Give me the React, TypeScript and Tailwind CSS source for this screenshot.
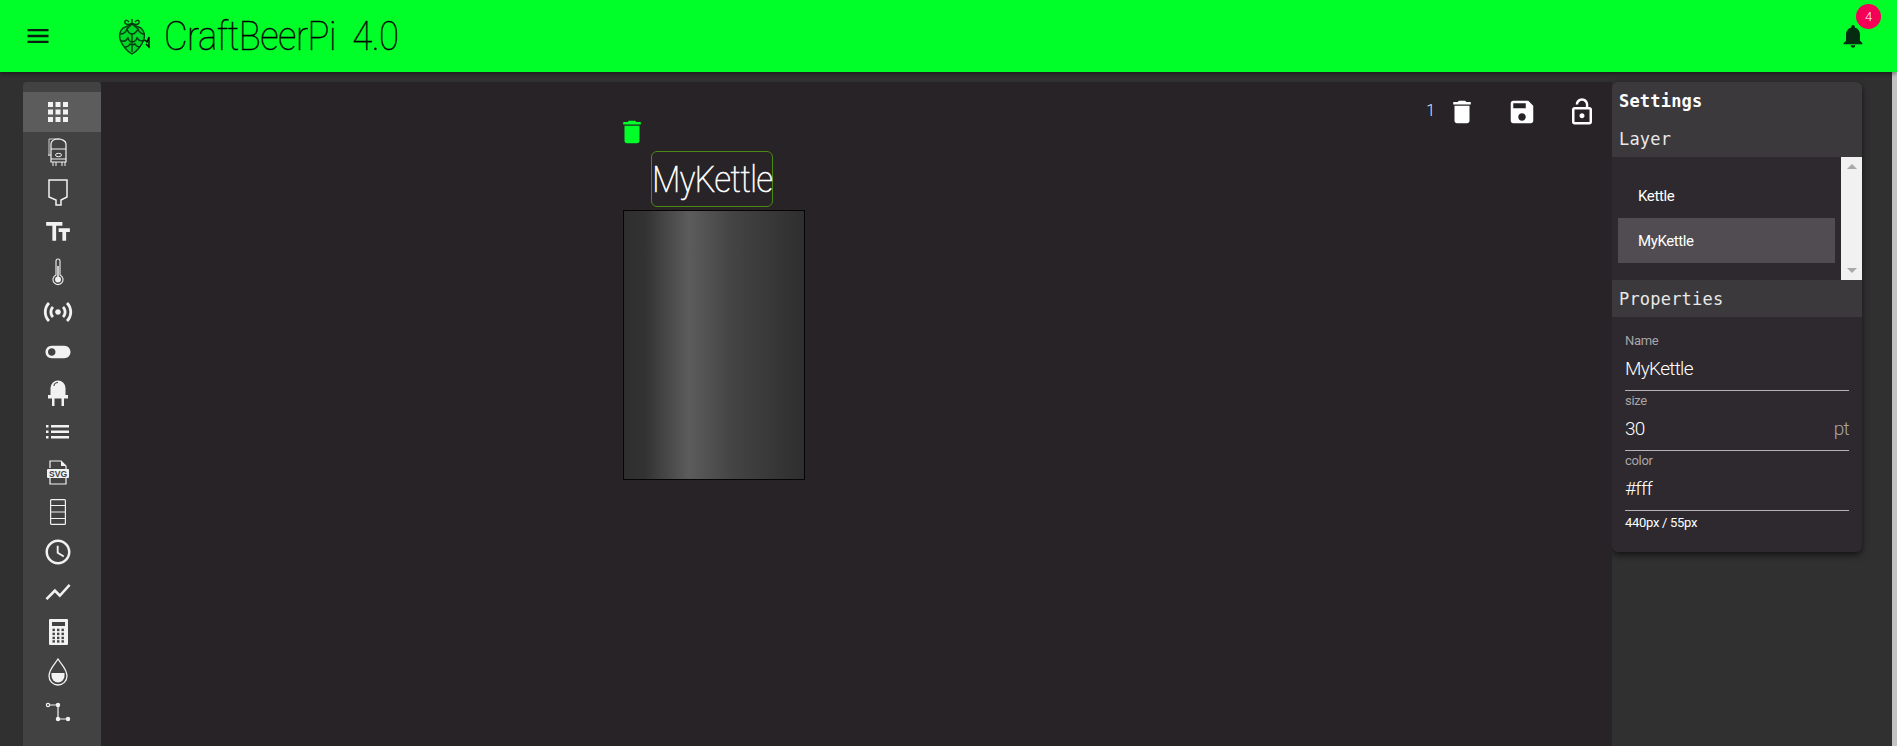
import React from "react";

const P = ({ d, className }: { d: string; className: string }) => (
  <svg viewBox="0 0 24 24" fill="currentColor" className={className}><path d={d} /></svg>
);

const Icons = {
  menu: "M3 18h18v-2H3v2zm0-5h18v-2H3v2zm0-7v2h18V6H3z",
  bell: "M12 22c1.1 0 2-.9 2-2h-4c0 1.1.89 2 2 2zm6-6v-5c0-3.07-1.64-5.64-4.5-6.32V4c0-.83-.67-1.5-1.5-1.5s-1.5.67-1.5 1.5v.68C7.63 5.36 6 7.92 6 11v5l-2 2v1h16v-1l-2-2z",
  del: "M6 19c0 1.1.9 2 2 2h8c1.1 0 2-.9 2-2V7H6v12zM19 4h-3.5l-1-1h-5l-1 1H5v2h14V4z",
  save: "M17 3H5c-1.11 0-2 .9-2 2v14c0 1.1.89 2 2 2h14c1.1 0 2-.9 2-2V7l-4-4zm-5 16c-1.66 0-3-1.34-3-3s1.34-3 3-3 3 1.34 3 3-1.34 3-3 3zm3-10H5V5h10v4z",
  lock: "M12 17c1.1 0 2-.9 2-2s-.9-2-2-2-2 .9-2 2 .9 2 2 2zm6-9h-1V6c0-2.76-2.24-5-5-5S7 3.24 7 6h1.9c0-1.71 1.39-3.1 3.1-3.1 1.71 0 3.1 1.39 3.1 3.1v2H6c-1.1 0-2 .9-2 2v10c0 1.1.9 2 2 2h12c1.1 0 2-.9 2-2V10c0-1.1-.9-2-2-2zm0 12H6V10h12v10z",
  apps: "M4 8h4V4H4v4zm6 12h4v-4h-4v4zm-6 0h4v-4H4v4zm0-6h4v-4H4v4zm6 0h4v-4h-4v4zm6-10v4h4V4h-4zm-6 4h4V4h-4v4zm6 6h4v-4h-4v4zm0 6h4v-4h-4v4z",
  text: "M2.5 4v3h5v12h3V7h5V4h-13zm19 5h-9v3h3v7h3v-7h3V9z",
  sensors: "M7.76 16.24C6.67 15.16 6 13.66 6 12s.67-3.16 1.76-4.24l1.42 1.42C8.45 9.9 8 10.9 8 12c0 1.1.45 2.1 1.17 2.83l-1.41 1.41zm8.48 0C17.33 15.16 18 13.66 18 12s-.67-3.16-1.76-4.24l-1.42 1.42C15.55 9.9 16 10.9 16 12c0 1.1-.45 2.1-1.17 2.83l1.41 1.41zM12 10c-1.1 0-2 .9-2 2s.9 2 2 2 2-.9 2-2-.9-2-2-2zm8 2c0 2.21-.9 4.21-2.35 5.65l1.42 1.42C20.88 17.26 22 14.76 22 12s-1.12-5.26-2.93-7.07l-1.42 1.42C19.1 7.79 20 9.79 20 12zM6.35 6.35L4.93 4.93C3.12 6.74 2 9.24 2 12s1.12 5.26 2.93 7.07l1.42-1.42C4.9 16.21 4 14.21 4 12s.9-4.21 2.35-5.65z",
  toggle: "M17 7H7c-2.76 0-5 2.24-5 5s2.24 5 5 5h10c2.76 0 5-2.24 5-5s-2.24-5-5-5zM7 15c-1.66 0-3-1.34-3-3s1.34-3 3-3 3 1.34 3 3-1.34 3-3 3z",
  clock: "M11.99 2C6.47 2 2 6.48 2 12s4.47 10 9.99 10C17.52 22 22 17.52 22 12S17.52 2 11.99 2zM12 20c-4.42 0-8-3.58-8-8s3.58-8 8-8 8 3.58 8 8-3.58 8-8 8zm.5-13H11v6l5.25 3.15.75-1.23-4.5-2.67z",
  chart: "M3.5 18.49l6-6.01 4 4L22 6.92l-1.41-1.41-7.09 7.97-4-4L2 16.99z",
};

const Tank = () => (
  <svg viewBox="0 0 20 28" className="w-[20px] h-[28px]" fill="none" stroke="currentColor" strokeWidth="1">
    <path d="M1 1h11M1 1v17M0 17h3" strokeWidth="0.8" />
    <path d="M3 6c0-3 3-5 7-5s8 2 8 5v18H3z" strokeWidth="1.2" />
    <path d="M3 11h15M3 21h15M5 24v4M8 24v4M14 24v4M17 24v4" />
    <ellipse cx="10.5" cy="17" rx="3" ry="1.7" />
  </svg>
);
const Hopper = () => (
  <svg viewBox="0 0 20 27" className="w-[20px] h-[27px]" fill="none" stroke="currentColor" strokeWidth="1.5">
    <path d="M1 1h18v17l-6 3v5H8v-5l-7-3z" />
  </svg>
);
const Thermo = () => (
  <svg viewBox="0 0 12 28" className="w-[12px] h-[28px]" fill="none" stroke="currentColor" strokeWidth="1.1">
    <path d="M4 17V3a2 2 0 0 1 4 0v14a5 5 0 1 1-4 0z" />
    <path d="M6 8v13" strokeWidth="1.5" />
    <circle cx="6" cy="21.5" r="3" fill="currentColor" stroke="none" />
  </svg>
);
const Led = () => (
  <svg viewBox="0 0 20 27" className="w-[20px] h-[27px]" fill="currentColor">
    <path d="M2.5 16V9a7.5 7.5 0 0 1 15 0v7z" />
    <path d="M6 7c0-2 2-3.5 4-3.5" stroke="#424242" strokeWidth="1.1" fill="none" />
    <path d="M0 16h20v3.5H0zM4 19h2.5v8H4zM13.5 19H16v8h-2.5z" />
  </svg>
);
const BulletList = () => (
  <svg viewBox="0 0 24 14" className="w-[24px] h-[14px]" fill="currentColor">
    <path d="M0 0h2.5v2.5H0zM0 5.5h2.5V8H0zM0 11h2.5v2.5H0zM5 0h18v2.5H5zM5 5.5h18V8H5zM5 11h18v2.5H5z" />
  </svg>
);
const SvgFile = () => (
  <svg viewBox="0 0 22 25" className="w-[22px] h-[25px]">
    <path d="M3 8V1h11l5 5v18H3v-7" fill="none" stroke="currentColor" strokeWidth="1.2" />
    <path d="M14 1v5h5z" fill="currentColor" />
    <rect x="0" y="9" width="22" height="9" rx="1" fill="currentColor" />
    <text x="11" y="16.8" textAnchor="middle" fontSize="8.6" fontWeight="700" fill="#424242" fontFamily="'Liberation Sans',sans-serif">SVG</text>
  </svg>
);
const Stack = () => (
  <svg viewBox="0 0 16 26" className="w-[16px] h-[26px]" fill="none" stroke="currentColor" strokeWidth="1.2">
    <rect x="0.6" y="0.6" width="14.8" height="24.8" rx="1" />
    <path d="M1 6.5h14M1 13h14M1 19.5h14" />
  </svg>
);
const Calc = () => (
  <svg viewBox="0 0 19 26" className="w-[19px] h-[26px]" fill="currentColor">
    <path fillRule="evenodd" d="M1 0h17a1 1 0 0 1 1 1v24a1 1 0 0 1-1 1H1a1 1 0 0 1-1-1V1a1 1 0 0 1 1-1zm2 3v4h13V3z" />
    {[10.5, 14.5, 18.5, 22].flatMap((y) =>
      [3.5, 8, 12.5].map((x) => <rect key={`${x}-${y}`} x={x} y={y - 0.8} width="2.4" height="2.4" fill="#424242" />)
    )}
  </svg>
);
const Drop = () => (
  <svg viewBox="0 0 20 28" className="w-[20px] h-[28px]" fill="none" stroke="currentColor" strokeWidth="1.3">
    <path d="M10 1c3 5 9 10 9 17a9 9 0 0 1-18 0C1 11 7 6 10 1z" />
    <path d="M3.5 15h13v3a6.5 6.5 0 0 1-13 0z" fill="currentColor" stroke="none" />
  </svg>
);
const PathIcon = () => (
  <svg viewBox="0 0 26 20" className="w-[26px] h-[20px]" fill="none" stroke="currentColor" strokeWidth="1.2">
    <path d="M4 3h9v14h9" />
    <circle cx="3" cy="3" r="1.6" fill="#424242" />
    <circle cx="13" cy="3" r="1.6" fill="currentColor" />
    <circle cx="13" cy="17" r="1.6" fill="currentColor" />
    <circle cx="23" cy="17" r="1.6" fill="currentColor" />
  </svg>
);
const Hop = () => (
  <svg viewBox="0 0 34 40" className="w-[34px] h-[40px]" fill="none" stroke="#04400f" strokeWidth="1.4">
    <path d="M13 6c-3-4-6 0-3 2 2 1 5 0 6-1 1 1 4 2 6 1 3-2 0-6-3-2M16 7V3" />
    <path d="M16 8 7 12c-3 3-4 7-3 11 2 6 7 12 12 15 5-3 10-9 12-15 1-4 0-8-3-11z" fill="#00d82a" />
    <path d="M4 18c4 0 6-2 7-5 1 3 3 5 5 5s5-2 6-5c1 3 3 5 7 5M4 24c3 2 6 1 8-2 1 3 2 4 4 4s4-1 5-4c2 3 4 4 8 2M9 31c2 0 4-1 5-3 1 1 3 1 5 0 1 2 2 3 5 3M16 18v8M16 26v10M11 13l5-5 6 5" />
    <path d="M29 24l2 2 2-5v10l-3-3" stroke="#000" />
  </svg>
);

const tools: React.ReactNode[] = [
  <P d={Icons.apps} className="w-[30px] h-[30px]" />,
  <Tank />,
  <Hopper />,
  <P d={Icons.text} className="w-[30px] h-[30px]" />,
  <Thermo />,
  <P d={Icons.sensors} className="w-[34px] h-[34px]" />,
  <P d={Icons.toggle} className="w-[30px] h-[30px]" />,
  <Led />,
  <BulletList />,
  <SvgFile />,
  <Stack />,
  <P d={Icons.clock} className="w-[30px] h-[30px]" />,
  <P d={Icons.chart} className="w-[30px] h-[30px]" />,
  <Calc />,
  <Drop />,
  <PathIcon />,
];

const ui = "font-['Roboto',sans-serif]";
const mono = "font-['DejaVu_Sans_Mono',monospace]";

const Field = ({ label, value, unit }: { label: string; value: string; unit?: string }) => (
  <div className="h-[60px] flex flex-col">
    <div className="h-[17px] text-[13px] leading-[17px] text-[#a9a5a8] tracking-[-0.3px]">{label}</div>
    <div className="h-[42px] flex items-center justify-between border-b-[1.5px] border-[#b5b2b5]">
      <span className="text-[19px] font-light text-white tracking-[-0.7px]">{value}</span>
      {unit && <span className="text-[19px] font-light text-[#a9a5a8] tracking-[-0.7px]">{unit}</span>}
    </div>
  </div>
);

export default function App() {
  return (
    <div className={`h-[746px] w-full overflow-hidden flex flex-col bg-[#303030] ${ui}`}>
      <header className="h-[72px] shrink-0 bg-[#00ff28] flex items-center pl-[25px] pr-[30px] shadow-[0_2px_4px_rgba(0,0,0,0.4)] z-10">
        <P d={Icons.menu} className="w-[28px] h-[28px] text-[#0a1f10] -ml-[1px]" />
        <div className="ml-[64px] flex items-center">
          <Hop />
          <span className="ml-[14px] inline-block origin-left scale-x-[0.89] text-[41px] leading-none font-thin text-black tracking-[-0.6px] whitespace-pre [-webkit-text-stroke:0.4px_black]">CraftBeerPi  4.0</span>
        </div>
        <div className="ml-auto relative w-[28px] h-[28px]">
          <P d={Icons.bell} className="w-[28px] h-[28px] text-[#052b10]" />
          <span className="absolute -top-[18px] left-[17px] w-[25px] h-[25px] rounded-full bg-[#f50057] text-white text-[13px] font-light flex items-center justify-center">4</span>
        </div>
      </header>

      <div className="flex-1 flex min-h-0">
        <div className="flex-1 flex min-w-0 pt-[10px] pl-[23px]">
          <aside className="w-[78px] shrink-0 bg-[#424242] rounded-t-[4px] pt-[10px] flex flex-col text-[#f2f2f2]">
            {tools.map((t, i) => (
              <div key={i} className={`h-[40px] shrink-0 flex items-center justify-center pr-[8px] ${i === 0 ? "bg-[#5c5c5c]" : ""}`}>{t}</div>
            ))}
          </aside>

          <main className="relative w-[1511px] shrink-0 bg-[#282327]">
            <div className="flex items-center justify-end pt-[15px] text-white">
              <span className="text-[16px] font-light text-[#cfeaff] mr-[12px] mb-[3px]">1</span>
              <P d={Icons.del} className="w-[30px] h-[30px]" />
              <P d={Icons.save} className="w-[30px] h-[30px] ml-[30px]" />
              <P d={Icons.lock} className="w-[30px] h-[30px] ml-[30px] mr-[15px]" />
            </div>
            <P d={Icons.del} className="absolute left-[516px] top-[35px] w-[30px] h-[30px] text-[#00ff28]" />
            <div className="absolute left-[550px] top-[69px] w-[122px] h-[56px] rounded-[6px] border border-[#4a8a12] flex items-center justify-center">
              <span className="inline-block scale-x-[0.88] text-[37px] leading-none font-thin text-white [-webkit-text-stroke:0.7px_white] tracking-[-0.5px]">MyKettle</span>
            </div>
            <div className="absolute left-[522px] top-[128px] w-[182px] h-[270px] border border-[#050505] bg-[linear-gradient(90deg,#2e2e2e_0%,#333_12%,#5c5c5c_36%,#444_60%,#2e2e2e_100%)]" />
          </main>

          <section className="w-[250px] shrink-0 self-start h-[470px] rounded-[6px] bg-[#2d292e] overflow-hidden shadow-[0_3px_6px_rgba(0,0,0,0.6)]">
            <div className="bg-[#3b393c] pt-[1px]">
              <div className={`h-[38px] pl-[7px] flex items-center text-[17px] font-bold text-white tracking-[0.2px] ${mono}`}>Settings</div>
              <div className={`h-[36px] pl-[7px] pt-[2px] flex items-center text-[17px] text-[#e8e8e8] tracking-[0.2px] ${mono}`}>Layer</div>
            </div>
            <div className="h-[123px] flex">
              <div className="flex-1 px-[6px] pt-[16px] text-white text-[15px]">
                <div className="h-[45px] pl-[20px] pt-[2px] flex items-center tracking-[-0.4px]">Kettle</div>
                <div className="h-[45px] pl-[20px] pt-[2px] flex items-center bg-[#504c52] tracking-[-0.4px]">MyKettle</div>
              </div>
              <div className="w-[21px] bg-[#f1f1f1] flex flex-col items-center justify-between py-[7px]">
                <div className="w-0 h-0 border-x-[5px] border-x-transparent border-b-[5px] border-b-[#a8a8a8]" />
                <div className="w-0 h-0 border-x-[5px] border-x-transparent border-t-[5px] border-t-[#a8a8a8]" />
              </div>
            </div>
            <div className={`h-[37px] bg-[#3b393c] pl-[7px] pt-[3px] flex items-center text-[17px] text-[#e8e8e8] tracking-[0.2px] ${mono}`}>Properties</div>
            <div className="px-[13px] pt-[15px]">
              <Field label="Name" value="MyKettle" />
              <Field label="size" value="30" unit="pt" />
              <Field label="color" value="#fff" />
              <div className="text-[13px] text-white mt-[1px] tracking-[-0.3px]">440px / 55px</div>
            </div>
          </section>
        </div>
        <div className="w-[5px] shrink-0 bg-[#c4c4c4]" />
      </div>
    </div>
  );
}
